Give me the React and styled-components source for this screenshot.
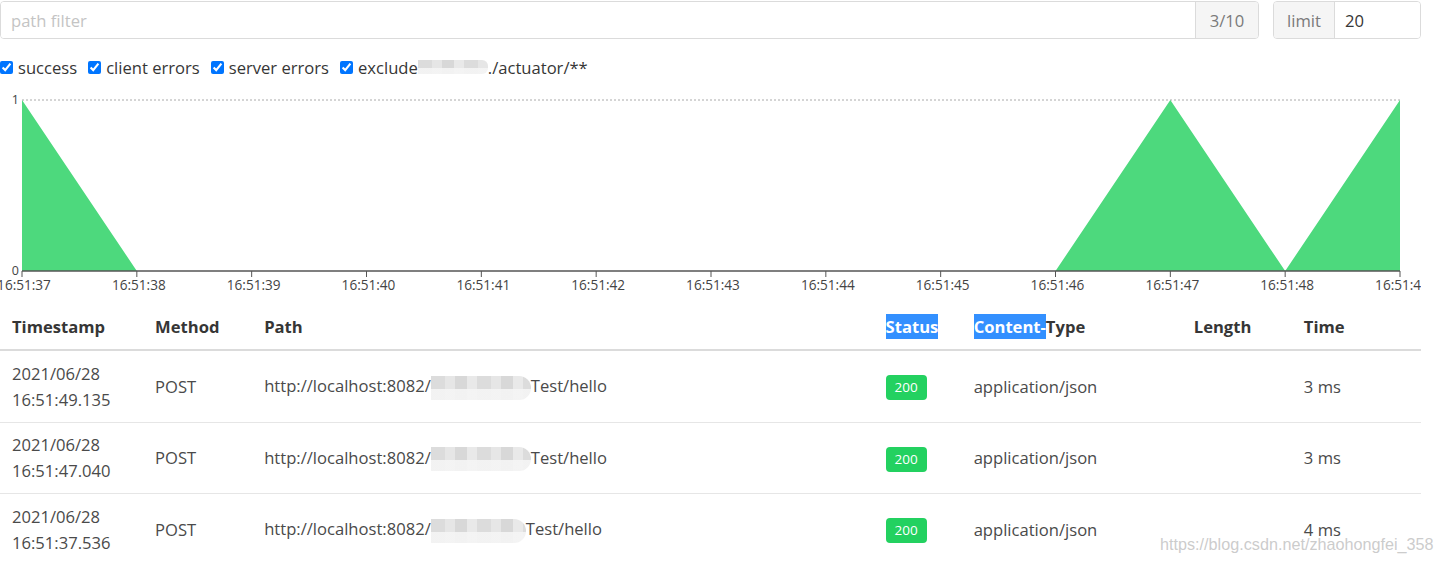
import React from 'react'
import styled, { createGlobalStyle } from 'styled-components'

const GlobalStyle = createGlobalStyle`
    html, body {
        margin: 0;
        padding: 0;
        background: #fff;
    }
    body {
        font-family: "Open Sans", "Noto Sans", sans-serif;
        font-size: 16.6px;
        color: #4a4a4a;
    }
`

const ticks = ['16:51:37', '16:51:38', '16:51:39', '16:51:40', '16:51:41', '16:51:42', '16:51:43',
    '16:51:44', '16:51:45', '16:51:46', '16:51:47', '16:51:48', '16:51:49']
const values = [1, 0, 0, 0, 0, 0, 0, 0, 0, 0, 1, 0, 1]

const rows = [
    { date: '2021/06/28', time: '16:51:49.135', ms: '3 ms', blur: 100 },
    { date: '2021/06/28', time: '16:51:47.040', ms: '3 ms', blur: 100 },
    { date: '2021/06/28', time: '16:51:37.536', ms: '4 ms', blur: 95 },
]

function Chart() {
    const x0 = 22
    const x1 = 1400
    const top = 100
    const bottom = 271
    const step = (x1 - x0) / (ticks.length - 1)
    const pts = values.map((v, i) => `${x0 + i * step},${bottom - v * (bottom - top)}`)
    const area = `M${x0},${bottom} L${pts.join(' L')} L${x1},${bottom} Z`
    return (
        <ChartBox>
            <svg width="1421" height="208" viewBox="0 95 1421 208">
                <line x1={x0} y1={top} x2={x1} y2={top} stroke="#aaa" strokeWidth="1" strokeDasharray="2 2" />
                <path d={area} fill="#4dd97d" />
                <line x1={x0} y1={bottom} x2={x1} y2={bottom} stroke="#555" strokeWidth="1.5" />
                <text x="19" y="104" textAnchor="end" fontSize="12.5" fill="#444" fontFamily="Open Sans, sans-serif">1</text>
                <text x="19" y="275" textAnchor="end" fontSize="12.5" fill="#444" fontFamily="Open Sans, sans-serif">0</text>
                {ticks.map((t, i) => (
                    <g key={t}>
                        <line x1={x0 + i * step} y1={bottom} x2={x0 + i * step} y2={bottom + 6} stroke="#555" strokeWidth="1" />
                        <text x={x0 + i * step + 2} y="290" textAnchor="middle" fontSize="13.6" fill="#444" fontFamily="Open Sans, sans-serif">{t}</text>
                    </g>
                ))}
            </svg>
        </ChartBox>
    )
}

function HttpTraces() {
    return (
        <Page>
            <GlobalStyle />
            <Toolbar>
                <Group grow>
                    <Input placeholder="path filter" />
                    <Addon right>3/10</Addon>
                </Group>
                <Group>
                    <Addon left>limit</Addon>
                    <Input defaultValue="20" />
                </Group>
            </Toolbar>
            <Filters>
                <Check><input type="checkbox" defaultChecked /> success</Check>
                <Check><input type="checkbox" defaultChecked /> client errors</Check>
                <Check><input type="checkbox" defaultChecked /> server errors</Check>
                <Check><input type="checkbox" defaultChecked /> exclude<Mosaic w={70} h={14} />./actuator/**</Check>
            </Filters>
            <Chart />
            <Table>
                <colgroup>
                    <col style={{ width: 143 }} />
                    <col style={{ width: 109 }} />
                    <col style={{ width: 621 }} />
                    <col style={{ width: 88 }} />
                    <col style={{ width: 220 }} />
                    <col style={{ width: 110 }} />
                    <col style={{ width: 129 }} />
                </colgroup>
                <thead>
                    <tr>
                        <Th>Timestamp</Th>
                        <Th>Method</Th>
                        <Th>Path</Th>
                        <Th><Selected>Status</Selected></Th>
                        <Th><Selected>Content-</Selected>Type</Th>
                        <Th>Length</Th>
                        <Th>Time</Th>
                    </tr>
                </thead>
                <tbody>
                    {rows.map((r) => (
                        <tr key={r.time}>
                            <Td>{r.date}<br />{r.time}</Td>
                            <Td>POST</Td>
                            <Td>http://localhost:8082/<Mosaic w={r.blur} h={24} tall />Test/hello</Td>
                            <Td><Badge>200</Badge></Td>
                            <Td>application/json</Td>
                            <Td></Td>
                            <Td>{r.ms}</Td>
                        </tr>
                    ))}
                </tbody>
            </Table>
            <Watermark>https://blog.csdn.net/zhaohongfei_358</Watermark>
        </Page>
    )
}

export default HttpTraces

const Page = styled.div`
    position: relative;
    width: 1440px;
    height: 562px;
    overflow: hidden;
`

const Toolbar = styled.div`
    display: flex;
    gap: 14px;
    width: 1421px;
    padding-top: 1px;
`

const Group = styled.div`
    display: flex;
    flex: ${(p) => (p.grow ? '1' : '0 0 148px')};
    height: 38px;
    border: 1px solid #dbdbdb;
    border-radius: 4px;
    overflow: hidden;
    box-sizing: border-box;
`

const Input = styled.input`
    flex: 1;
    min-width: 0;
    border: none;
    outline: none;
    padding: 0 10px;
    font-family: "Open Sans", sans-serif;
    font-size: 16.6px;
    color: #363636;

    &::placeholder {
        color: #c4c4c4;
    }
`

const Addon = styled.div`
    display: flex;
    align-items: center;
    justify-content: center;
    width: ${(p) => (p.left ? '60px' : '62px')};
    background: #f5f5f5;
    color: #7a7a7a;
    border-left: ${(p) => (p.right ? '1px solid #dbdbdb' : 'none')};
    border-right: ${(p) => (p.left ? '1px solid #dbdbdb' : 'none')};
`

const Filters = styled.div`
    display: flex;
    align-items: center;
    height: 56px;
    gap: 11px;
`

const Check = styled.label`
    display: flex;
    align-items: center;
    color: #363636;
    white-space: nowrap;

    input {
        width: 13px;
        height: 13px;
        margin: 0 5px 0 0;
        accent-color: #0075ff;
    }
`

const Mosaic = styled.span`
    display: inline-block;
    vertical-align: middle;
    width: ${(p) => p.w}px;
    height: ${(p) => p.h}px;
    border-radius: ${(p) => (p.tall ? '0 12px 12px 0' : '0 6px 6px 0')};
    background:
        linear-gradient(to bottom, rgba(255,255,255,0) 0 55%, rgba(245,245,245,0.9) 55% 100%),
        repeating-linear-gradient(to right, #dcdcdc 0 14px, #e6e6e6 14px 24px, #d8d8d8 24px 36px, #e9e9e9 36px 46px);
`

const ChartBox = styled.div`
    height: 210px;

    svg {
        display: block;
    }
`

const Table = styled.table`
    width: 1421px;
    table-layout: fixed;
    border-collapse: collapse;
`

const Th = styled.th`
    text-align: left;
    font-weight: 700;
    color: #363636;
    padding: 9px 12px;
    line-height: 26px;
    border-bottom: 2px solid #dbdbdb;
    white-space: nowrap;
`

const Td = styled.td`
    padding: 9.5px 12px 9px;
    line-height: 26px;
    border-bottom: 1px solid #e6e6e6;
    color: #4a4a4a;
    vertical-align: middle;
    white-space: nowrap;
`

const Selected = styled.span`
    display: inline-block;
    line-height: 25px;
    background: #3390ff;
    color: #fff;
`

const Badge = styled.span`
    display: inline-block;
    width: 41px;
    height: 25px;
    line-height: 25px;
    text-align: center;
    background: #23d160;
    color: #fff;
    border-radius: 4px;
    font-size: 13.5px;
    vertical-align: middle;
`

const Watermark = styled.div`
    position: absolute;
    left: 1160px;
    top: 535px;
    font-family: "Liberation Sans", Arial, sans-serif;
    font-size: 16.2px;
    color: rgba(190, 190, 190, 0.8);
    white-space: nowrap;
`
